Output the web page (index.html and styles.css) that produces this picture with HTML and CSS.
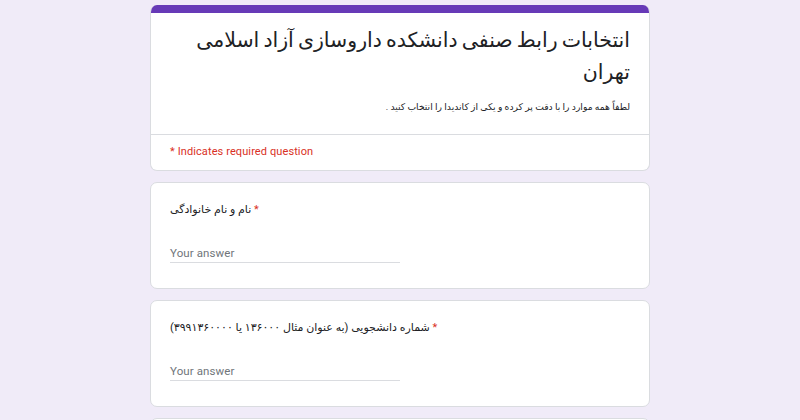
FILE: index.html
```html
<!DOCTYPE html>
<html lang="fa">
<head>
<meta charset="utf-8">
<title>انتخابات رابط صنفی</title>
<link rel="stylesheet" href="styles.css">
</head>
<body>
<div class="page">
  <div class="card head-card">
    <div class="bar"></div>
    <div class="head-body">
      <div class="title" dir="rtl">انتخابات رابط صنفی دانشکده داروسازی آزاد اسلامی<br>تهران</div>
      <div class="desc" dir="rtl">لطفاً همه موارد را با دقت پر کرده و یکی از کاندیدا را انتخاب کنید .</div>
    </div>
    <div class="req">* Indicates required question</div>
  </div>

  <div class="card q-card">
    <div class="q-title"><span dir="auto">نام و نام خانوادگی</span><span class="star"> *</span></div>
    <div class="answer">Your answer</div>
  </div>

  <div class="card q-card">
    <div class="q-title"><span dir="auto">شماره دانشجویی (به عنوان مثال ۱۳۶۰۰۰ یا ۳۹۹۱۳۶۰۰۰۰)</span><span class="star"> *</span></div>
    <div class="answer">Your answer</div>
  </div>

  <div class="card q-card">
    <div class="q-title"><span dir="auto">شماره تماس</span><span class="star"> *</span></div>
    <div class="answer">Your answer</div>
  </div>
</div>
</body>
</html>
```

FILE: styles.css
```css
html, body {
  margin: 0;
  padding: 0;
}
body {
  background: #f0ebf8;
  font-family: Roboto, "DejaVu Sans", sans-serif;
  color: #202124;
}
.page {
  width: 500px;
  margin: 0 auto;
  padding-top: 5px;
  display: flex;
  flex-direction: column;
  gap: 11px;
}
.card {
  background: #fff;
  border: 1px solid #dadce0;
  border-radius: 7px;
  box-sizing: border-box;
  overflow: hidden;
}
.head-card {
  border-top: none;
}
.bar {
  height: 8px;
  background: #673ab7;
}
.head-body {
  padding: 11px 19px 19px;
  border-bottom: 1px solid #dadce0;
}
.title {
  font-size: 20.5px;
  line-height: 32px;
  word-spacing: -1px;
  white-space: nowrap;
  color: #202124;
}
.desc {
  margin-top: 10px;
  font-size: 9.2px;
  line-height: 17px;
  color: #202124;
}
.req {
  padding: 8px 19px 10px;
  font-size: 11px;
  line-height: 17px;
  color: #d93025;
  letter-spacing: 0.1px;
}
.q-card {
  padding: 18px 19px 25px;
}
.q-title {
  font-size: 11px;
  line-height: 18px;
  color: #202124;
}
.star {
  color: #d93025;
}
.answer {
  margin-top: 25px;
  width: 230px;
  font-size: 11.5px;
  line-height: 18px;
  color: #70757a;
  border-bottom: 1px solid #dadce0;
  letter-spacing: 0.1px;
}
```
